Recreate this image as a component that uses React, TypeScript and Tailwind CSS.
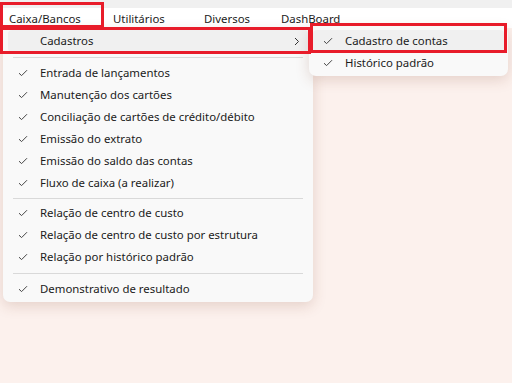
import React from "react";

const font = { fontFamily: '"Noto Sans", "Open Sans", sans-serif' };

function Check() {
  return (
    <svg width="10" height="8" viewBox="0 0 10 8" className="shrink-0">
      <path d="M1 4.2 L3.6 6.6 L9 1.2" fill="none" stroke="#444" strokeWidth="1" />
    </svg>
  );
}

function Item({ label }: { label: string }) {
  return (
    <div className="flex h-[22px] items-center rounded-[4px] pl-[10px]">
      <Check />
      <span className="ml-[12px] text-[11.4px] text-[#1b1b1b]">{label}</span>
    </div>
  );
}

function Sep({ h = "h-[9px]" }: { h?: string }) {
  return (
    <div className={`flex items-center px-[5px] ${h}`}>
      <div className="h-px w-full bg-[#d9d9d9]" />
    </div>
  );
}

export default function App() {
  return (
    <div className="relative h-[383px] w-[512px] overflow-hidden bg-[#fcf1ed]" style={font}>
      <div className="h-[8px] bg-[#f0f0f0]" />
      <div className="flex h-[20px] items-center bg-white pt-px text-[11.4px] text-[#1b1b1b]">
        <span className="w-[113px] pl-[9px]">Caixa/Bancos</span>
        <span className="w-[91px]">Utilitários</span>
        <span className="w-[77px]">Diversos</span>
        <span>DashBoard</span>
      </div>

      {/* main dropdown */}
      <div className="absolute left-[3px] top-[28px] w-[310px] rounded-b-[7px] bg-[#f9f9f9] px-[5px] pb-[2px] pt-[2px] shadow-[0_4px_14px_rgba(120,60,40,0.18)]">
        <div className="flex h-[22px] items-center justify-between rounded-[4px] bg-[#f0f0f0] pl-[32px] pr-[8px]">
          <span className="text-[11.4px] text-[#1b1b1b]">Cadastros</span>
          <svg width="6" height="9" viewBox="0 0 6 9">
            <path d="M1 1 L4.5 4.5 L1 8" fill="none" stroke="#333" strokeWidth="1" />
          </svg>
        </div>
        <Sep h="h-[10px]" />
        <Item label="Entrada de lançamentos" />
        <Item label="Manutenção dos cartões" />
        <Item label="Conciliação de cartões de crédito/débito" />
        <Item label="Emissão do extrato" />
        <Item label="Emissão do saldo das contas" />
        <Item label="Fluxo de caixa (a realizar)" />
        <Sep h="h-[8px]" />
        <Item label="Relação de centro de custo" />
        <Item label="Relação de centro de custo por estrutura" />
        <Item label="Relação por histórico padrão" />
        <Sep h="h-[10px]" />
        <Item label="Demonstrativo de resultado" />
      </div>

      {/* submenu */}
      <div className="absolute left-[309px] top-[26px] w-[199px] rounded-[7px] bg-[#f9f9f9] px-[4px] pb-[2px] pt-[4px] shadow-[0_4px_14px_rgba(120,60,40,0.18)]">
        <div className="rounded-[4px] bg-[#f0f0f0]">
          <Item label="Cadastro de contas" />
        </div>
        <Item label="Histórico padrão" />
      </div>

      {/* highlight boxes */}
      <div className="absolute left-0 top-[2px] h-[26px] w-[104px] border-[3px] border-[#e81c2a]" />
      <div className="absolute left-0 top-[27px] h-[27px] w-[311px] border-[3px] border-[#e81c2a]" />
      <div className="absolute left-[310px] top-[23px] h-[30px] w-[197px] border-[3px] border-[#e81c2a]" />
    </div>
  );
}
